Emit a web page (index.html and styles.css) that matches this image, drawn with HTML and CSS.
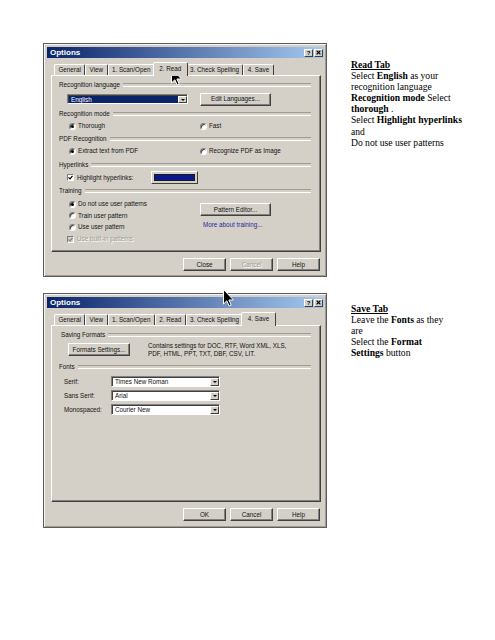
FILE: index.html
```html
<!DOCTYPE html>
<html lang="en">
<head>
<meta charset="utf-8">
<title>Options dialog – Read and Save tabs</title>
<link rel="stylesheet" href="styles.css">
</head>
<body>
<main class="page">

  <section class="row row-read">
    <div class="dialog">
      <div class="titlebar">
        <span class="title">Options</span>
        <span class="tb-btn">?</span>
        <span class="tb-btn"><svg width="5" height="5" viewBox="0 0 5 5"><path d="M0.6 0.6 L4.4 4.4 M4.4 0.6 L0.6 4.4" stroke="#000" stroke-width="1.2"/></svg></span>
      </div>
      <div class="tabs">
        <span class="tab">General</span>
        <span class="tab">View</span>
        <span class="tab">1. Scan/Open</span>
        <span class="tab active">2. Read</span>
        <span class="tab">3. Check Spelling</span>
        <span class="tab">4. Save</span>
      </div>
      <div class="panel">
        <div class="group">Recognition language</div>
        <div class="opt-row h16 mt2">
          <div class="cell-left">
            <div class="combo combo-lang focused"><span class="combo-value">English</span><span class="combo-arrow"></span></div>
          </div>
          <span class="btn btn-wide h14">Edit Languages...</span>
        </div>
        <div class="group mt3">Recognition mode</div>
        <div class="opt-row h10 mt3">
          <div class="cell-left"><span class="radio on"></span>Thorough</div>
          <div class="cell-right"><span class="radio"></span>Fast</div>
        </div>
        <div class="group mt4">PDF Recognition</div>
        <div class="opt-row h10 mt3">
          <div class="cell-left"><span class="radio on"></span>Extract text from PDF</div>
          <div class="cell-right"><span class="radio"></span>Recognize PDF as Image</div>
        </div>
        <div class="group mt5">Hyperlinks</div>
        <div class="opt-row h13 mt2">
          <div class="cell-left">
            <span class="check"><svg width="5" height="5" viewBox="0 0 5 5"><path d="M0.5 2.4 L2 3.9 L4.5 0.8" fill="none" stroke="#000" stroke-width="1.2"/></svg></span>Highlight hyperlinks:
            <span class="swatch"><span class="swatch-fill"></span></span>
          </div>
        </div>
        <div class="group mt3">Training</div>
        <div class="training">
          <div class="cell-left col">
            <div class="t-row"><span class="radio on"></span>Do not use user patterns</div>
            <div class="t-row"><span class="radio"></span>Train user pattern</div>
            <div class="t-row"><span class="radio"></span>Use user pattern</div>
            <div class="t-row disabled"><span class="check check-dis"><svg width="5" height="5" viewBox="0 0 5 5"><path d="M0.5 2.4 L2 3.9 L4.5 0.8" fill="none" stroke="#808080" stroke-width="1.2"/></svg></span>Use built-in patterns</div>
          </div>
          <div class="cell-right training-side">
            <span class="btn btn-wide">Pattern Editor...</span>
            <span class="link">More about training...</span>
          </div>
        </div>
      </div>
      <div class="actions">
        <span class="btn">Close</span>
        <span class="btn disabled">Cancel</span>
        <span class="btn">Help</span>
      </div>
      <svg class="cursor cursor-read" width="12" height="18" viewBox="0 0 12 18"><path d="M0.5 0.5 V15 L3.8 11.8 L6.2 17 L8.2 16.1 L5.9 11 H10.5 Z" fill="#000" stroke="#fff" stroke-width="1"/></svg>
    </div>
    <div class="note">
      <p class="note-title">Read Tab</p>
      <p>Select <b>English</b> as your<br>recognition language<br><b>Recognition mode</b> Select<br><b>thorough</b> .<br>Select <b>Highlight hyperlinks</b><br>and<br>Do not use user patterns</p>
    </div>
  </section>

  <section class="row row-save">
    <div class="dialog dialog-save">
      <div class="titlebar">
        <span class="title">Options</span>
        <span class="tb-btn">?</span>
        <span class="tb-btn"><svg width="5" height="5" viewBox="0 0 5 5"><path d="M0.6 0.6 L4.4 4.4 M4.4 0.6 L0.6 4.4" stroke="#000" stroke-width="1.2"/></svg></span>
      </div>
      <div class="tabs">
        <span class="tab">General</span>
        <span class="tab">View</span>
        <span class="tab">1. Scan/Open</span>
        <span class="tab">2. Read</span>
        <span class="tab">3. Check Spelling</span>
        <span class="tab active">4. Save</span>
      </div>
      <div class="panel">
        <div class="group group-save">Saving Formats</div>
        <div class="fmt-row">
          <span class="btn btn-fmt">Formats Settings...</span>
          <p class="fmt-note">Contains settings for DOC, RTF, Word XML, XLS,<br>PDF, HTML, PPT, TXT, DBF, CSV, LIT.</p>
        </div>
        <div class="group mt7">Fonts</div>
        <div class="font-row mt5">
          <span class="font-label">Serif:</span>
          <div class="combo combo-font"><span class="combo-value">Times New Roman</span><span class="combo-arrow"></span></div>
        </div>
        <div class="font-row mt3">
          <span class="font-label">Sans Serif:</span>
          <div class="combo combo-font"><span class="combo-value">Arial</span><span class="combo-arrow"></span></div>
        </div>
        <div class="font-row mt3">
          <span class="font-label">Monospaced:</span>
          <div class="combo combo-font"><span class="combo-value">Courier New</span><span class="combo-arrow"></span></div>
        </div>
      </div>
      <div class="actions">
        <span class="btn">OK</span>
        <span class="btn">Cancel</span>
        <span class="btn">Help</span>
      </div>
      <svg class="cursor cursor-save" width="12" height="18" viewBox="0 0 12 18"><path d="M0.5 0.5 V15 L3.8 11.8 L6.2 17 L8.2 16.1 L5.9 11 H10.5 Z" fill="#000" stroke="#fff" stroke-width="1"/></svg>
    </div>
    <div class="note">
      <p class="note-title">Save Tab</p>
      <p>Leave the <b>Fonts</b> as they<br>are<br>Select the <b>Format</b><br><b>Settings</b> button</p>
    </div>
  </section>

</main>
</body>
</html>
```

FILE: styles.css
```css
* { box-sizing: border-box; }

body {
  margin: 0;
  background: #fff;
  font-family: "Liberation Sans", Arial, sans-serif;
}

.page { padding: 43px 0 0 43px; }

.row { display: flex; align-items: flex-start; }
.row + .row { margin-top: 16px; }

/* ---------- right-hand notes ---------- */
.note {
  margin-left: 24px;
  font-family: "Liberation Serif", "Times New Roman", serif;
  font-size: 9.6px;
  line-height: 11.15px;
  color: #000;
  white-space: nowrap;
}
.note p { margin: 0; }
.note-title { font-weight: bold; text-decoration: underline; }
.row-read .note { margin-top: 15.7px; }
.row-save .note { margin-top: 9.7px; }

/* ---------- dialog frame ---------- */
.dialog {
  position: relative;
  width: 284px;
  height: 234px;
  background: #d4d0c8;
  border: 1px solid #5c5c5c;
  box-shadow: inset 1px 1px #f4f4f0, inset -1px -1px #a09c94;
  padding: 3px 2px 0 3px;
  display: flex;
  flex-direction: column;
  font-size: 6.3px;
  line-height: 8px;
  color: #111;
}
.dialog-save { height: 235px; }

.titlebar {
  height: 11px;
  background: linear-gradient(to right, #0a246a, #a6caf0);
  display: flex;
  align-items: center;
  padding: 0 1px 0 3px;
}
.title { flex: 1; color: #fff; font-weight: bold; font-size: 8px; }
.tb-btn {
  width: 9px;
  height: 8px;
  background: #d4d0c8;
  border: 1px solid;
  border-color: #fff #404040 #404040 #fff;
  display: flex;
  align-items: center;
  justify-content: center;
  font-size: 6px;
  font-weight: bold;
  line-height: 1;
  color: #000;
}
.tb-btn + .tb-btn { margin-left: 1px; }

/* ---------- tabs ---------- */
.tabs {
  display: flex;
  align-items: flex-end;
  height: 13px;
  margin-top: 4px;
  padding-left: 7px;
  position: relative;
  z-index: 1;
}
.tab {
  height: 11px;
  padding: 0 3.4px;
  border: 1px solid;
  border-bottom: none;
  border-color: #fff #404040 transparent #fff;
  border-radius: 2px 2px 0 0;
  display: flex;
  align-items: center;
  white-space: nowrap;
}
.tab.active {
  height: 14px;
  margin: 0 -2px -1px;
  padding: 0 5.4px 1px;
  background: #d4d0c8;
  position: relative;
}

/* ---------- tab panel ---------- */
.panel {
  height: 177px;
  margin: 0 3px 0 4px;
  border: 1px solid;
  border-color: #fff #404040 #404040 #fff;
  box-shadow: inset -1px -1px #808080;
  padding-top: 5px;
  display: flex;
  flex-direction: column;
}

.group {
  display: flex;
  align-items: center;
  height: 8px;
  padding: 0 9px 0 7px;
  white-space: nowrap;
}
.group::after {
  content: "";
  flex: 1;
  height: 2px;
  margin-left: 3px;
  border-top: 1px solid #a09c94;
  border-bottom: 1px solid #fff;
}
.group-save { padding-left: 9px; }

.mt2 { margin-top: 2px; }
.mt3 { margin-top: 3px; }
.mt4 { margin-top: 4px; }
.mt5 { margin-top: 5px; }
.mt7 { margin-top: 7px; }
.h10 { height: 10px; }
.h13 { height: 13px; }
.h14 { height: 14px; }
.h16 { height: 16px; }

.opt-row {
  display: flex;
  align-items: center;
  padding-left: 15px;
  white-space: nowrap;
}
.cell-left { width: 133px; display: flex; align-items: center; }
.cell-left.col { flex-direction: column; align-items: stretch; }
.cell-right { display: flex; align-items: center; }

/* radio & checkbox */
.radio {
  flex: none;
  width: 7px;
  height: 7px;
  border-radius: 50%;
  border: 1px solid;
  border-color: #808080 #fff #fff #808080;
  box-shadow: inset 1px 1px #404040;
  background: #fff;
  margin: 0 2px 0 2px;
  display: flex;
  align-items: center;
  justify-content: center;
}
.cell-right .radio { margin-left: 0; }
.radio.on::after {
  content: "";
  width: 3px;
  height: 3px;
  border-radius: 50%;
  background: #000;
}
.check {
  flex: none;
  width: 7px;
  height: 7px;
  border: 1px solid;
  border-color: #808080 #fff #fff #808080;
  background: #fff;
  margin-right: 3px;
  display: flex;
  align-items: center;
  justify-content: center;
}
.check-dis { background: #d4d0c8; }

.swatch {
  width: 47px;
  height: 13px;
  margin: 0 2px 0 auto;
  padding: 2px;
  border: 1px solid;
  border-color: #fff #404040 #404040 #fff;
  display: flex;
}
.swatch-fill { flex: 1; background: #0a1890; border: 1px solid #1a1a1a; }

/* combo boxes */
.combo {
  display: flex;
  height: 10px;
  border: 1px solid;
  border-color: #808080 #fff #fff #808080;
  box-shadow: inset 1px 1px #404040;
  background: #fff;
  padding: 1px 0 0 1px;
}
.combo-lang { width: 121px; }
.combo-font { width: 109px; height: 11px; }
.combo-value {
  flex: 1;
  padding-left: 2px;
  display: flex;
  align-items: center;
  white-space: nowrap;
}
.combo.focused .combo-value { background: #0a246a; color: #fff; }
.combo-arrow {
  width: 9px;
  background: #d4d0c8;
  border: 1px solid;
  border-color: #fff #404040 #404040 #fff;
  display: flex;
  align-items: center;
  justify-content: center;
}
.combo-arrow::before {
  content: "";
  border-left: 2px solid transparent;
  border-right: 2px solid transparent;
  border-top: 2px solid #000;
}

/* buttons */
.btn {
  width: 43px;
  height: 13px;
  background: #d4d0c8;
  border: 1px solid;
  border-color: #fff #404040 #404040 #fff;
  box-shadow: inset -1px -1px #808080;
  display: flex;
  align-items: center;
  justify-content: center;
  white-space: nowrap;
}
.btn.disabled { color: #a09c94; text-shadow: 1px 1px #fff; }
.btn-wide { width: 71px; }
.btn-fmt { width: 62px; flex: none; }

.actions {
  display: flex;
  justify-content: flex-end;
  gap: 4px;
  margin: 6px 4px 0 0;
}

/* training block */
.training {
  display: flex;
  padding-left: 15px;
  margin-top: 3.5px;
  white-space: nowrap;
}
.t-row { height: 11.6px; display: flex; align-items: center; }
.t-row.disabled { color: #a09c94; text-shadow: 1px 1px #fff; }
.training-side {
  flex-direction: column;
  align-items: flex-start;
  padding-top: 4.5px;
}
.link { margin: 5px 0 0 3px; color: #1f2a96; }

/* save tab */
.fmt-row {
  display: flex;
  align-items: center;
  height: 13px;
  margin-top: 4px;
  padding-left: 16px;
}
.fmt-note { margin: 0 0 0 18px; white-space: nowrap; line-height: 8px; }

.font-row {
  display: flex;
  align-items: center;
  height: 11px;
  padding-left: 12px;
}
.font-label { width: 47px; white-space: nowrap; }

/* mouse pointers lying over the screenshots */
.cursor { position: absolute; }
.cursor-read { left: 127px; top: 24px; }
.cursor-save { left: 179px; top: -5px; }
```
